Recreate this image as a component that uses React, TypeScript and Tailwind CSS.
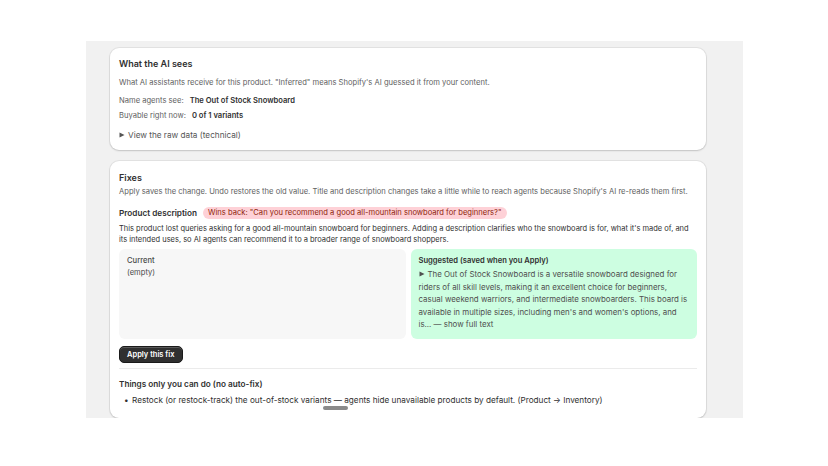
import React from "react";

const Card = ({ children, className = "" }: { children: React.ReactNode; className?: string }) => (
  <div
    className={`bg-white rounded-[9px] shadow-[0_0_0_1px_rgba(0,0,0,0.06),0_1px_2px_rgba(0,0,0,0.14)] px-[9px] ${className}`}
  >
    {children}
  </div>
);

const Caret = () => (
  <svg width="6" height="6" viewBox="0 0 6 6" className="inline-block mr-[3px] align-[0px]">
    <path d="M0.5 0.5 L5.5 3 L0.5 5.5 Z" fill="currentColor" />
  </svg>
);

export default function App() {
  return (
    <div className="w-[828px] h-[466px] bg-white font-['Inter',sans-serif] text-[#303030]">
      <div className="pt-[41px] pl-[86px]">
        {/* Preview frame */}
        <div className="relative w-[657px] h-[377px] overflow-hidden bg-[#f1f1f1] bg-[radial-gradient(#e4e4e4_0.6px,transparent_0.6px)] bg-[size:6px_6px] pt-[7px] pl-[24px]">
          <div className="w-[596px] flex flex-col gap-[11px]">
            {/* What the AI sees */}
            <Card className="pt-[9px] pb-[8px]">
              <h2 className="text-[9px] leading-[14px] font-semibold">What the AI sees</h2>
              <p className="mt-[6px] text-[7.6px] leading-[12px] text-[#616161]">
                What AI assistants receive for this product. "Inferred" means Shopify's AI guessed it from your content.
              </p>
              <div className="mt-[6px] flex items-center gap-[6px] text-[7.6px] leading-[12px]">
                <span className="text-[#616161]">Name agents see:</span>
                <span className="font-semibold">The Out of Stock Snowboard</span>
              </div>
              <div className="mt-[3px] flex items-center gap-[6px] text-[7.6px] leading-[12px]">
                <span className="text-[#616161]">Buyable right now:</span>
                <span className="font-semibold">0 of 1 variants</span>
              </div>
              <div className="mt-[7px] text-[8.2px] leading-[13px] text-[#555555]">
                <Caret />View the raw data (technical)
              </div>
            </Card>

            {/* Fixes */}
            <Card className="pt-[10px] pb-[12px]">
              <h2 className="text-[9px] leading-[14px] font-semibold">Fixes</h2>
              <p className="mt-[1px] text-[7.6px] leading-[12px] text-[#616161]">
                Apply saves the change. Undo restores the old value. Title and description changes take a little while to reach agents because Shopify's AI re-reads them first.
              </p>

              <div className="mt-[8px] flex items-center gap-[6px]">
                <span className="text-[8.2px] leading-[14px] font-semibold">Product description</span>
                <span className="rounded-full bg-[#fed1d7] text-[#8e1f0b] text-[7.6px] leading-[12px] px-[5px]">
                  Wins back: "Can you recommend a good all-mountain snowboard for beginners?"
                </span>
              </div>

              <p className="mt-[3px] text-[7.5px] leading-[11px] tracking-[-0.01px]">
                This product lost queries asking for a good all-mountain snowboard for beginners. Adding a description clarifies who the snowboard is for, what it's made of, and its intended uses, so AI agents can recommend it to a broader range of snowboard shoppers.
              </p>

              <div className="mt-[4px] grid grid-cols-2 gap-[5px]">
                <div className="h-[90px] rounded-[6px] bg-[#f7f7f7] px-[8px] pt-[6px] text-[7.6px] leading-[12px]">
                  <div className="font-medium text-[#4a4a4a]">Current</div>
                  <div className="text-[#4a4a4a]">(empty)</div>
                </div>
                <div className="h-[90px] rounded-[6px] bg-[#cdfee1] px-[8px] pt-[6px]">
                  <div className="text-[7.6px] leading-[12px] font-semibold">Suggested (saved when you Apply)</div>
                  <p className="mt-[1px] text-[7.9px] leading-[12.5px] text-[#4f4f4f]">
                    <Caret />The Out of Stock Snowboard is a versatile snowboard designed for riders of all skill levels, making it an excellent choice for beginners, casual weekend warriors, and intermediate snowboarders. This board is available in multiple sizes, including men's and women's options, and is... — show full text
                  </p>
                </div>
              </div>

              <button className="mt-[5px] h-[17px] px-[7px] rounded-[5px] bg-[#303030] border border-[#1a1a1a] text-white text-[7.5px] font-semibold leading-none shadow-[inset_0_1px_0_rgba(255,255,255,0.2)]">
                Apply this fix
              </button>

              <div className="mt-[5px] border-t border-[#ebebeb]" />

              <h3 className="mt-[9px] text-[8.2px] leading-[12px] font-semibold">Things only you can do (no auto-fix)</h3>
              <div className="mt-[4px] flex text-[8.2px] leading-[12px] text-[#303030]">
                <span className="w-[13px] pl-[5px]">•</span>
                <span>
                  Restock (or restock-track) the out-of-stock variants — agents hide unavailable products by default. (Product → Inventory)
                </span>
              </div>
            </Card>
          </div>

          {/* scroll handle */}
          <div className="absolute left-[237px] top-[365px] w-[25px] h-[3.5px] rounded-full bg-[#8a8a8a]" />
        </div>
      </div>
    </div>
  );
}
